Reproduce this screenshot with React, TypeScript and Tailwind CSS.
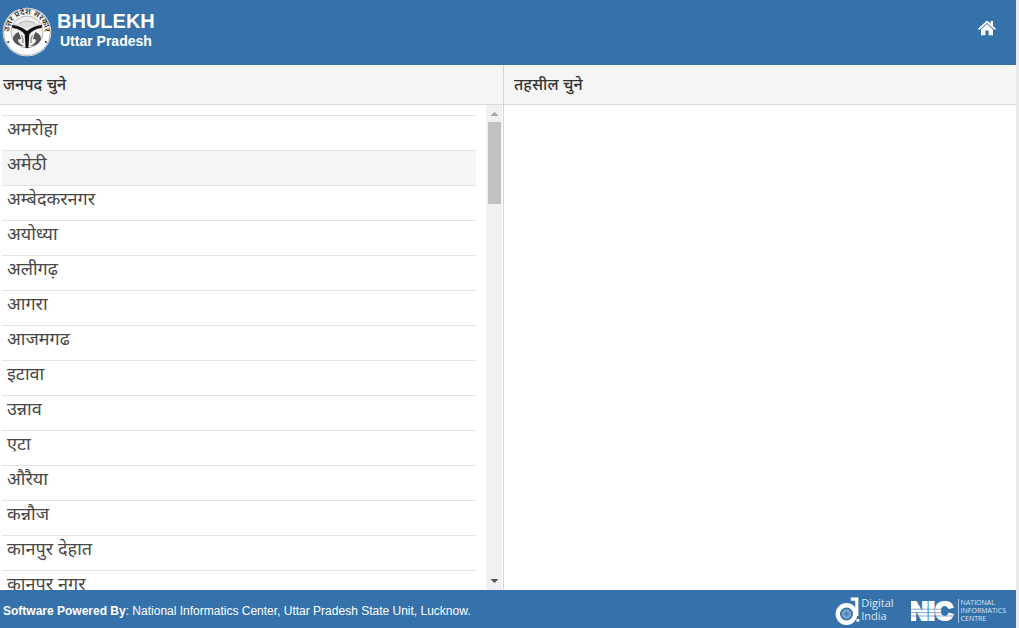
import { useState } from "react";

const districts = [
  "अमरोहा",
  "अमेठी",
  "अम्बेदकरनगर",
  "अयोध्या",
  "अलीगढ़",
  "आगरा",
  "आजमगढ",
  "इटावा",
  "उन्नाव",
  "एटा",
  "औरैया",
  "कन्नौज",
  "कानपुर देहात",
  "कानपुर नगर",
];

function Emblem() {
  return (
    <svg viewBox="0 0 50 50" className="size-[50px] shrink-0" aria-hidden="true">
      <defs>
        <path id="emblem-arc" d="M9 32 A17.5 17.5 0 1 1 41 32" />
      </defs>
      <circle cx="25" cy="25" r="24.3" fill="#fff" />
      <circle cx="25" cy="25" r="23.4" fill="none" stroke="#8a8a8a" strokeWidth="0.7" />
      <circle cx="25" cy="25" r="16" fill="#efefef" stroke="#999" strokeWidth="0.7" />
      <text fontSize="8" fontWeight="600" fill="#333">
        <textPath href="#emblem-arc" startOffset="50%" textAnchor="middle">
          उत्तर प्रदेश सरकार
        </textPath>
      </text>
      <path d="M11 17.5 Q18 16.5 25 14.5 Q32 16.5 39 17.5 Q32 19 25 21 Q18 19 11 17.5 Z" fill="#ddd" />
      <path d="M9.8 18 Q18 18.5 25 24 Q32 18.5 40.2 18 L39.5 21 Q31 22 27.3 27.5 L26.4 41 H23.6 L22.7 27.5 Q19 22 10.5 21 Z" fill="#111" />
      <path d="M16.5 25 Q10.5 27.5 11 32.5 Q14 39.5 22 39 Q15.5 36 16 32.5 L19 32 Q18 27.5 16.5 25 Z" fill="#555" />
      <path d="M33.5 25 Q39.5 27.5 39 32.5 Q36 39.5 28 39 Q34.5 36 34 32.5 L31 32 Q32 27.5 33.5 25 Z" fill="#555" />
      <path d="M19.5 28 Q21.5 32 21 36 M30.5 28 Q28.5 32 29 36" fill="none" stroke="#888" strokeWidth="1.2" />
      <path d="M17 16.5 Q21 14 25 14 Q29 14 33 16.5" fill="none" stroke="#999" strokeWidth="0.7" />
      <circle cx="6.2" cy="35" r="1" fill="#333" />
      <circle cx="43.8" cy="35" r="1" fill="#333" />
    </svg>
  );
}

function HomeIcon() {
  return (
    <svg viewBox="0 0 18 16" className="h-4 w-[18px]" fill="#fff" aria-hidden="true">
      <path d="M9 0.5 L12.6 3.7 V1 H15 V5.9 L18 8.7 L16.9 9.9 L9 2.9 L1.1 9.9 L0 8.7 Z" />
      <path d="M9 4.1 L15 9.4 V15.3 H10.6 V10.6 H7.4 V15.3 H3 V9.4 Z" />
    </svg>
  );
}

function DigitalIndia() {
  return (
    <div className="flex items-start">
      <svg viewBox="0 0 25 30" className="h-[30px] w-[25px]" fill="none" aria-hidden="true">
        <circle cx="11.5" cy="18" r="8.7" stroke="#fff" strokeWidth="4.4" />
        <path d="M15.8 3.2 H21.8 V20" stroke="#fff" strokeWidth="3.2" />
        <rect x="21.4" y="23" width="3" height="2.6" fill="#fff" />
        <circle cx="11.5" cy="18" r="4.2" fill="#7fa6cb" stroke="#b9d0e4" strokeWidth="0.7" />
        <path d="M7.3 18 H15.7 M11.5 13.8 V22.2 M8.6 15.1 L14.4 20.9 M14.4 15.1 L8.6 20.9" stroke="#3572ab" strokeWidth="0.6" />
      </svg>
      <p className="pl-px font-['Open_Sans',sans-serif] text-[11px] leading-[13px] text-[#dce8f2]">
        Digital
        <br />
        India
      </p>
    </div>
  );
}

function NicLogo() {
  return (
    <div className="flex items-center">
      <svg viewBox="0 0 46 30" className="h-[30px] w-[46px]" role="img" aria-label="NIC">
        <text x="-1" y="23.5" fontFamily="Liberation Sans, Arial, sans-serif" fontWeight="700" fontSize="25" fill="#fff" stroke="#fff" strokeWidth="2.2">
          NIC
        </text>
        <path d="M0 13.2 H46 M0 16.6 H46 M0 20 H46" stroke="#3572ab" strokeWidth="0.6" />
      </svg>
      <p className="ml-px border-l border-[#a9c4dc] pl-[2px] font-['Open_Sans',sans-serif] text-[7px] leading-[8px] text-[#dce8f2]">
        NATIONAL
        <br />
        INFORMATICS
        <br />
        CENTRE
      </p>
    </div>
  );
}

function ScrollTrack() {
  return (
    <div className="flex w-4 shrink-0 flex-col items-center bg-[#f1f1f1]" aria-hidden="true">
      <svg viewBox="0 0 16 17" className="h-[17px] w-4">
        <path d="M4.5 11 L8.5 7 L12.5 11 Z" fill="#a3a3a3" />
      </svg>
      <div className="h-[17%] w-[13px] bg-[#c1c1c1]" />
      <svg viewBox="0 0 16 17" className="mt-auto h-[17px] w-4">
        <path d="M4.5 6 L8.5 10 L12.5 6 Z" fill="#505050" />
      </svg>
    </div>
  );
}

export default function App() {
  const [active, setActive] = useState("अमेठी");

  return (
    <div className="h-screen bg-[#e9e9e9] pr-[3px] font-['Liberation_Sans',Arial,'Noto_Sans_Devanagari',sans-serif] text-[#333]">
      <div className="flex h-full flex-col bg-white">
        <header className="flex h-[65px] shrink-0 items-center justify-between bg-[#3572ab] pr-5 pb-[2px] pl-[2px] text-white">
          <div className="flex items-center gap-[5px]">
            <Emblem />
            <div className="pb-[2px] font-bold">
              <h1 className="text-xl leading-5">BHULEKH</h1>
              <p className="pl-[3px] text-sm leading-5">Uttar Pradesh</p>
            </div>
          </div>
          <a href="#home" aria-label="Home" className="pb-2">
            <HomeIcon />
          </a>
        </header>

        <main className="grid min-h-0 flex-1 grid-cols-[504fr_512fr]">
          <section className="flex min-h-0 flex-col border-r border-[#d5d5d5]">
            <h2 className="flex h-10 shrink-0 items-center border-b border-[#d9d9d9] bg-[#f5f5f5] pl-[3px] text-base font-medium">
              जनपद चुने
            </h2>
            <div className="flex min-h-0 flex-1 gap-[10px] pr-px pl-[2px]">
              <ul className="min-w-0 flex-1 overflow-y-auto pt-[10px] text-[#484848] [scrollbar-width:none]">
                {districts.map((name) => (
                  <li key={name} className="h-[35px] border-t border-[#e3e3e3]">
                    <button
                      type="button"
                      onClick={() => setActive(name)}
                      className={
                        name === active
                          ? "block h-[34px] w-full bg-[#f5f5f5] pb-2 pl-[5px] text-left text-lg leading-6"
                          : "block h-[34px] w-full pb-2 pl-[5px] text-left text-lg leading-6"
                      }
                    >
                      {name}
                    </button>
                  </li>
                ))}
              </ul>
              <ScrollTrack />
            </div>
          </section>

          <section className="min-h-0">
            <h2 className="flex h-10 items-center border-b border-[#d9d9d9] bg-[#f5f5f5] pl-[10px] text-base font-medium">
              तहसील चुने
            </h2>
          </section>
        </main>

        <footer className="flex h-[38px] shrink-0 items-center justify-between bg-[#3572ab] pr-[10px] pl-[3px] text-white">
          <p className="pt-1 text-xs leading-4">
            <strong>Software Powered By</strong>: National Informatics Center, Uttar Pradesh State Unit, Lucknow.
          </p>
          <div className="flex items-center gap-[17px] pt-1">
            <DigitalIndia />
            <NicLogo />
          </div>
        </footer>
      </div>
    </div>
  );
}
